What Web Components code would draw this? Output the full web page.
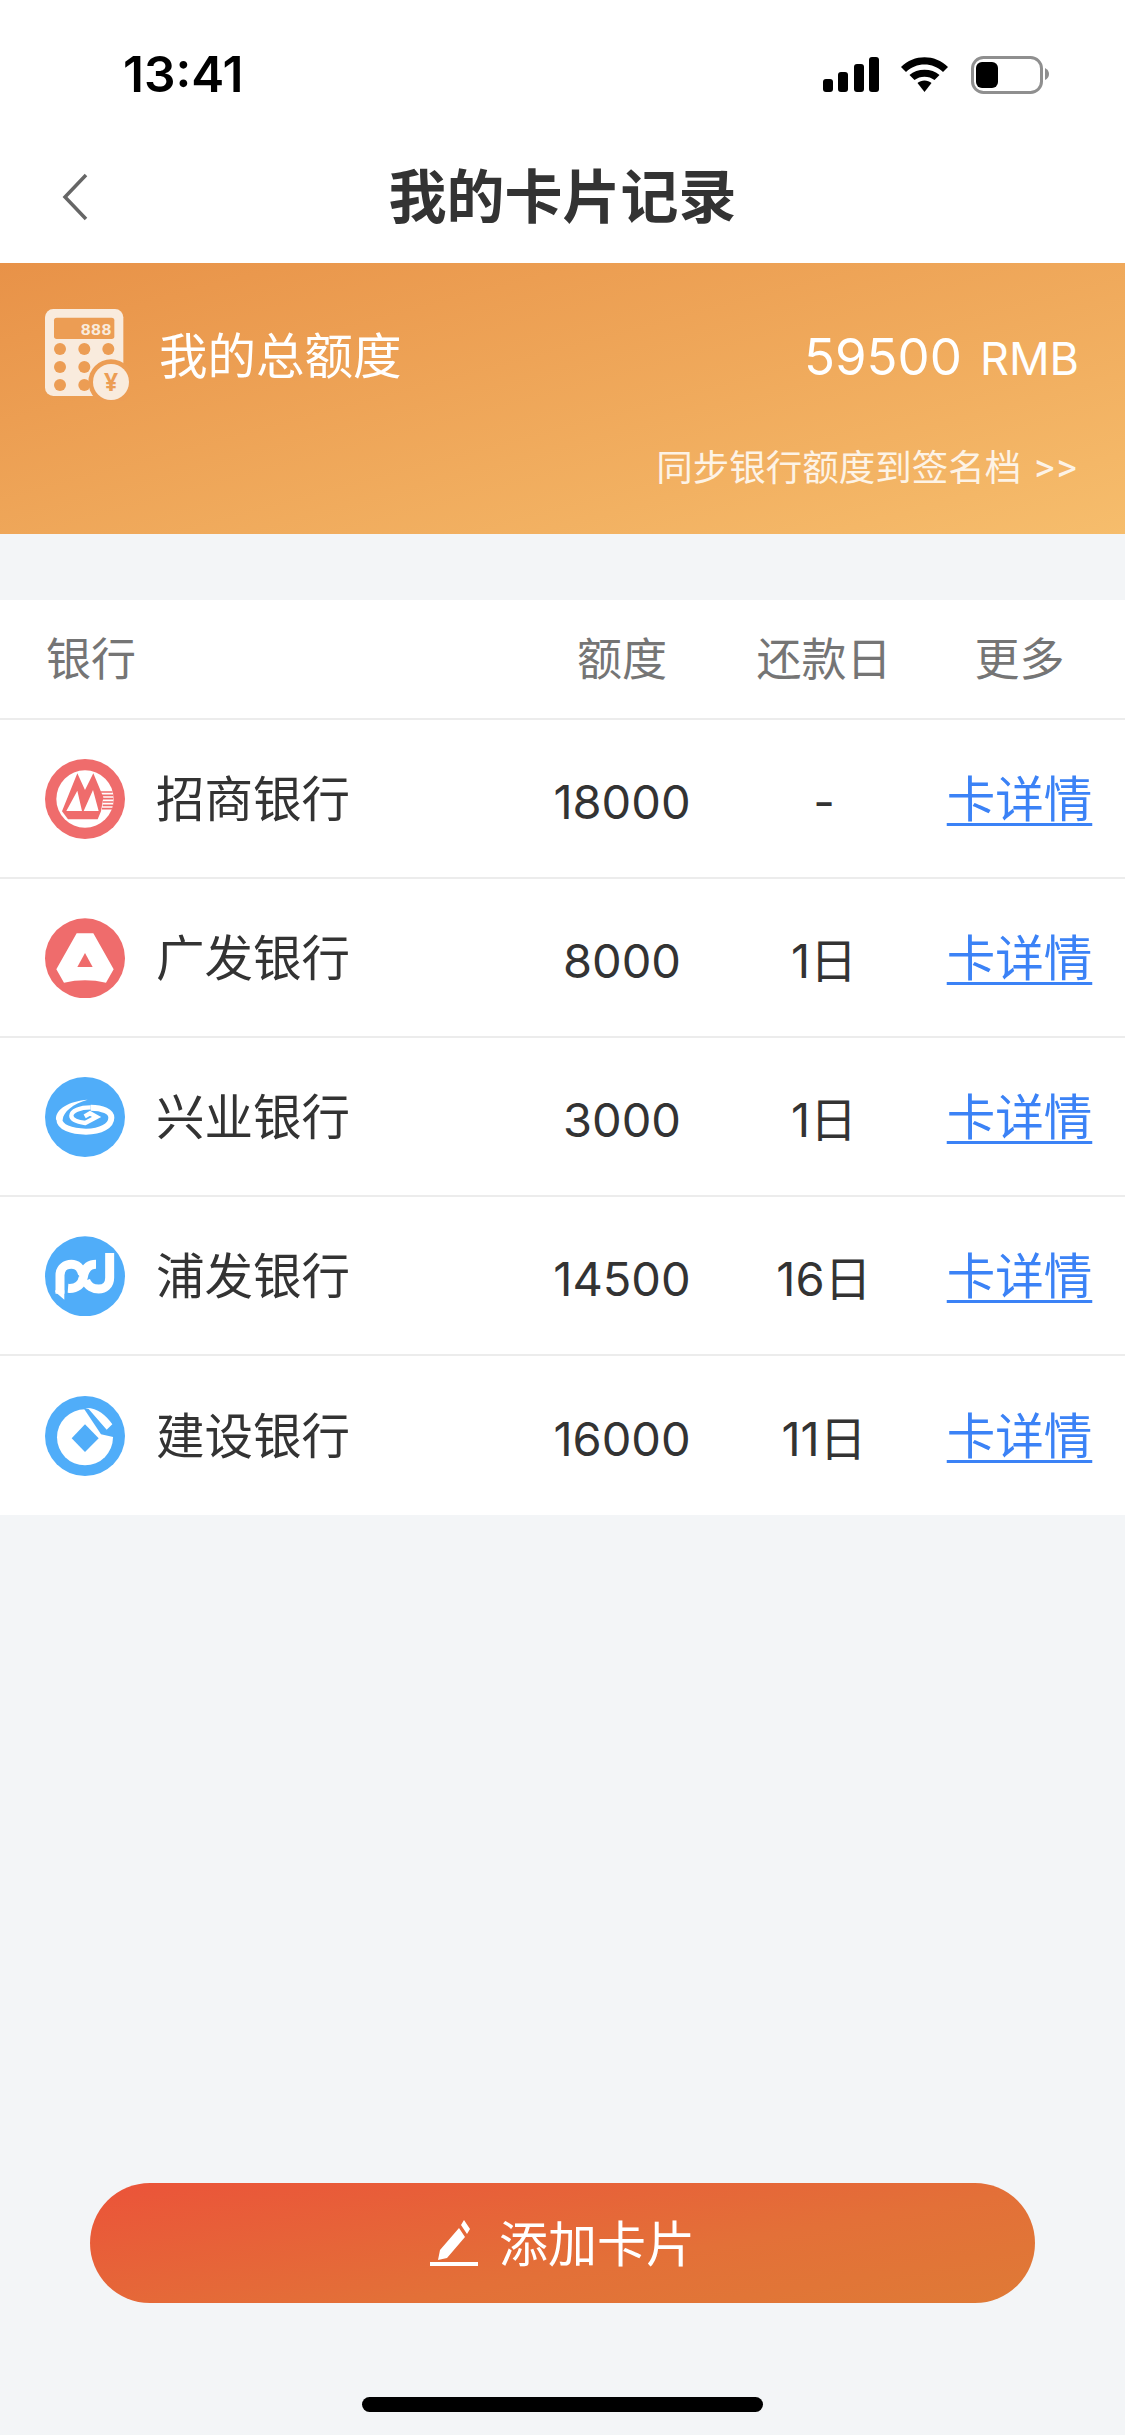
<!DOCTYPE html>
<html lang="zh">
<head>
<meta charset="utf-8">
<title>我的卡片记录</title>
<style>
    html, body { margin: 0; padding: 0; background: #f3f5f7; }
    body { font-family: Roboto, "Noto Sans CJK SC", "Noto Sans", sans-serif; }
</style>
</head>
<body>
<app-page>
    <status-bar time="13:41"></status-bar>
    <nav-bar>我的卡片记录</nav-bar>
    <quota-banner label="我的总额度" amount="59500" unit="RMB" sync="同步银行额度到签名档"></quota-banner>
    <card-table>
        <bank-row name="招商银行" quota="18000" due="-" logo="cmb"></bank-row>
        <bank-row name="广发银行" quota="8000" due="1日" logo="cgb"></bank-row>
        <bank-row name="兴业银行" quota="3000" due="1日" logo="cib"></bank-row>
        <bank-row name="浦发银行" quota="14500" due="16日" logo="spdb"></bank-row>
        <bank-row name="建设银行" quota="16000" due="11日" logo="ccb"></bank-row>
    </card-table>
    <add-button>添加卡片</add-button>
    <home-bar></home-bar>
</app-page>

<script>
var logos = {
    // logos are drawn in the coordinates of the zoomed crop, hence the odd viewBoxes
    cmb: `<svg viewBox="77 57 240 240" width="80" height="80">
        <circle cx="197" cy="177" r="120" fill="#ef6c6c"/>
        <circle cx="197" cy="177" r="86" fill="#fff"/>
        <path fill="#ef6c6c" d="M128 214 L174 100 L197 150 L222 100 L252 172 L245 214 L235 238 L146 238 Z"/>
        <path fill="#fff" d="M141 213 L174 152 L188 213 Z M193 213 L221 150 L238 213 Z"/>
        <path stroke="#ef6c6c" stroke-width="5" d="M245 156 H280 M247 166 H282 M250 176 H282 M250 186 H282 M250 196 H281 M248 206 H278"/>
    </svg>`,
    cgb: `<svg viewBox="77 532 240 240" width="80" height="80">
        <circle cx="197" cy="653" r="120" fill="#ef6c6c"/>
        <path fill="#fff" d="M172 578 H222 L283 686 L260 726 Q197 712 134 726 L111 686 Z"/>
        <path fill="#ef6c6c" d="M197 637 L220 679 H174 Z"/>
    </svg>`,
    cib: `<svg viewBox="77 50 240 240" width="80" height="80">
        <circle cx="197" cy="170" r="120" fill="#50adf9"/>
        <path fill="#fff" d="M205 118 C150 122 108 145 110 178 L130 178 C132 155 160 130 205 118 Z"/>
        <g fill="none" stroke="#fff">
            <path stroke-width="18" d="M120 176 C120 200 155 214 200 214 C245 214 276 196 276 172 C276 154 250 142 214 142"/>
            <path stroke-width="13" d="M214 141 C182 141 156 151 156 166 C156 178 178 185 198 188 L232 170 L212 159 L196 168"/>
        </g>
    </svg>`,
    spdb: `<svg viewBox="77 527 240 240" width="80" height="80">
        <circle cx="197" cy="648" r="120" fill="#50adf9"/>
        <g fill="none" stroke="#fff" stroke-width="27">
            <path d="M122 700 V645 C122 622 140 612 156 612 C172 612 186 622 190 642"/>
            <path d="M230 612 C205 612 195 630 192 650 C188 672 172 686 146 684"/>
            <path d="M271 578 V652 C271 675 255 686 238 686 C222 686 205 678 199 660"/>
        </g>
        <path fill="#fff" d="M108 695 L135 718 V690 H108 Z"/>
    </svg>`,
    ccb: `<svg viewBox="77 73 240 240" width="80" height="80">
        <circle cx="197" cy="193" r="120" fill="#50adf9"/>
        <circle cx="197" cy="197" r="84" fill="#fff"/>
        <path fill="#50adf9" d="M192 108 L245 188 L285 197 L285 125 L240 90 Z"/>
        <path fill="#fff" d="M198 109 C232 107 260 130 279 158 L262 174 L208 112 Z"/>
        <path fill="#50adf9" d="M197 158 L238 200 L197 241 L157 200 Z"/>
    </svg>`,
}

class AppPage extends HTMLElement {
    constructor() {
        super()
        this.attachShadow({ mode: 'open' }).innerHTML = `
<style>
    :host {
        display: flex;
        flex-direction: column;
        width: 1125px;
        height: 2435px;
        background: #f3f5f7;
        overflow: hidden;
    }
</style>
<slot></slot>`
    }
}

class StatusBar extends HTMLElement {
    connectedCallback() {
        this.attachShadow({ mode: 'open' }).innerHTML = `
<style>
    :host {
        display: flex;
        align-items: center;
        justify-content: space-between;
        height: 148px;
        padding: 0 75px 0 123px;
        background: #fff;
    }
    span {
        padding-top: 2px;
        font: 600 49.5px/1 Inter, "Liberation Sans", sans-serif;
        color: #000;
    }
    svg { display: block; }
</style>
<span>${this.getAttribute('time')}</span>
<svg viewBox="823 55 227 39" width="227" height="39">
    <rect x="823" y="79" width="10" height="13" rx="3"/>
    <rect x="838" y="72" width="10" height="20" rx="3"/>
    <rect x="854" y="64" width="10" height="28" rx="3"/>
    <rect x="869" y="57" width="10" height="35" rx="3"/>
    <path d="M901 67 C914 54 935 54 948 67 L943 72 C933 62 916 62 906 72 Z"/>
    <path d="M909.5 75 C917 68 932 68 939.5 75 L934.5 80 C929 75.5 920 75.5 914.5 80 Z"/>
    <path d="M917.5 83 C921 79.5 928 79.5 931.5 83 L924.5 92 Z"/>
    <rect x="972.5" y="57.5" width="69" height="35" rx="11" fill="#fff" stroke="#8f8f8f" stroke-width="3"/>
    <rect x="976" y="62" width="22" height="26" rx="6"/>
    <path d="M1045 68 Q1049 70 1049 74 Q1049 78 1045 80 Z" fill="#8f8f8f"/>
</svg>`
    }
}

class NavBar extends HTMLElement {
    constructor() {
        super()
        this.attachShadow({ mode: 'open' }).innerHTML = `
<style>
    :host {
        display: flex;
        align-items: center;
        justify-content: center;
        position: relative;
        height: 100px;
        padding-bottom: 15px;
        background: #fff;
        font-size: 58px;
        font-weight: 700;
        line-height: 1;
        color: #333;
    }
    svg { position: absolute; left: 60px; top: 24px; }
</style>
<svg viewBox="0 0 30 50" width="30" height="50">
    <path d="M26 3 L5 25 L26 47" fill="none" stroke="#666" stroke-width="3.5"/>
</svg>
<slot></slot>`
    }
}

class QuotaBanner extends HTMLElement {
    connectedCallback() {
        this.attachShadow({ mode: 'open' }).innerHTML = `
<style>
    :host {
        display: flex;
        flex-direction: column;
        height: 225px;
        padding: 46px 46px 0 45px;
        background: linear-gradient(165deg, #e89248 0%, #f6bd6c 100%);
        color: #fff;
    }
    #main {
        display: flex;
        align-items: center;
        height: 92px;
    }
    svg { display: block; flex: none; margin-right: 29px; }
    #label { flex: 1; padding-top: 6px; font-size: 48.5px; line-height: 1; }
    #amount { padding-top: 2px; font: 400 51px/1 Inter, Roboto, sans-serif; }
    #unit { padding-top: 6px; margin-left: 18px; font: 400 45px/1 Inter, Roboto, sans-serif; }
    #sync {
        margin-top: 42px;
        font-size: 36.5px;
        line-height: 50px;
        text-align: right;
        color: #fdf3e6;
    }
    #sync span { margin-left: 13px; font-size: 39px; letter-spacing: 2px; }
</style>
<div id="main">
    <svg viewBox="135 147 255 276" width="85" height="92">
        <rect x="135" y="147" width="235" height="261" rx="25" fill="#f9ebdd"/>
        <rect x="162" y="173" width="181" height="64" rx="8" fill="#ec9d54"/>
        <text x="288" y="226" text-anchor="middle" font-family="Liberation Mono, monospace" font-weight="700" font-size="52" fill="#f9ebdd">888</text>
        <g fill="#ec9d54">
            <circle cx="180" cy="267" r="18"/><circle cx="253" cy="267" r="18"/><circle cx="325" cy="267" r="18"/>
            <circle cx="180" cy="321" r="18"/><circle cx="253" cy="321" r="18"/>
            <circle cx="180" cy="375" r="18"/><circle cx="253" cy="375" r="18"/>
            <circle cx="333" cy="366" r="68"/>
        </g>
        <circle cx="333" cy="366" r="54" fill="#f9ebdd"/>
        <text x="333" y="392" text-anchor="middle" font-family="Noto Sans, sans-serif" font-weight="700" font-size="74" fill="#ec9d54">¥</text>
    </svg>
    <span id="label">${this.getAttribute('label')}</span>
    <span id="amount">${this.getAttribute('amount')}</span><span id="unit">${this.getAttribute('unit')}</span>
</div>
<div id="sync">${this.getAttribute('sync')}<span>&gt;&gt;</span></div>`
    }
}

class CardTable extends HTMLElement {
    constructor() {
        super()
        this.attachShadow({ mode: 'open' }).innerHTML = `
<style>
    :host {
        display: block;
        margin-top: 66px;
        background: #fff;
    }
    #head {
        display: grid;
        grid-template-columns: 1fr 200px 204px 187px;
        align-items: center;
        height: 115px;
        padding: 3px 12px 0 46px;
        border-bottom: 2px solid #ececec;
        font-size: 45px;
        line-height: 1;
        color: #757575;
    }
    #head span + span { text-align: center; }
</style>
<div id="head"><span>银行</span><span>额度</span><span>还款日</span><span>更多</span></div>
<slot></slot>`
    }
}

class BankRow extends HTMLElement {
    connectedCallback() {
        this.attachShadow({ mode: 'open' }).innerHTML = `
<style>
    :host {
        display: grid;
        grid-template-columns: 1fr 200px 204px 187px;
        align-items: center;
        height: 157px;
        padding: 0 12px 0 45px;
        border-bottom: 2px solid #ececec;
        font-size: 48.5px;
        line-height: 1;
        color: #333;
    }
    :host(:last-child) { border-bottom: 0; height: 159px; }
    #name { display: flex; align-items: center; gap: 31px; }
    #name span, .num, a { padding-top: 6px; }
    svg { display: block; }
    .num { text-align: center; font-family: Inter, "Noto Sans CJK SC", sans-serif; font-size: 47px; }
    a { color: #3b82f6; text-align: center; text-decoration: underline; text-decoration-thickness: 3px; text-underline-offset: 6px; }
</style>
<div id="name">${logos[this.getAttribute('logo')]}<span>${this.getAttribute('name')}</span></div>
<span class="num">${this.getAttribute('quota')}</span>
<span class="num">${this.getAttribute('due')}</span>
<a href="#">卡详情</a>`
    }
}

class AddButton extends HTMLElement {
    constructor() {
        super()
        this.attachShadow({ mode: 'open' }).innerHTML = `
<style>
    :host {
        display: flex;
        align-items: center;
        justify-content: center;
        gap: 21px;
        width: 945px;
        height: 120px;
        margin: auto 0 94px 90px;
        border-radius: 60px;
        background: linear-gradient(170deg, #eb5339 0%, #e37038 60%, #df7a36 100%);
        color: #fff;
        font-size: 49px;
        line-height: 1;
    }
    span { padding-top: 4px; }
    svg { display: block; }
</style>
<svg viewBox="0 0 48 46" width="48" height="46">
    <path fill="#fff" d="M34 0 L40 9 L37 14 L31 5 Z M29 8 L35 17 L17 38 L8 40 L10 30 Z"/>
    <rect x="0" y="42" width="48" height="4" fill="#fff"/>
</svg>
<span><slot></slot></span>`
    }
}

class HomeBar extends HTMLElement {
    constructor() {
        super()
        this.attachShadow({ mode: 'open' }).innerHTML = `
<style>
    :host {
        display: block;
        flex: none;
        width: 401px;
        height: 15px;
        margin: 0 0 23px 362px;
        border-radius: 8px;
        background: #000;
    }
</style>`
    }
}

window.customElements.define('app-page', AppPage)
window.customElements.define('status-bar', StatusBar)
window.customElements.define('nav-bar', NavBar)
window.customElements.define('quota-banner', QuotaBanner)
window.customElements.define('card-table', CardTable)
window.customElements.define('bank-row', BankRow)
window.customElements.define('add-button', AddButton)
window.customElements.define('home-bar', HomeBar)
</script>
</body>
</html>
